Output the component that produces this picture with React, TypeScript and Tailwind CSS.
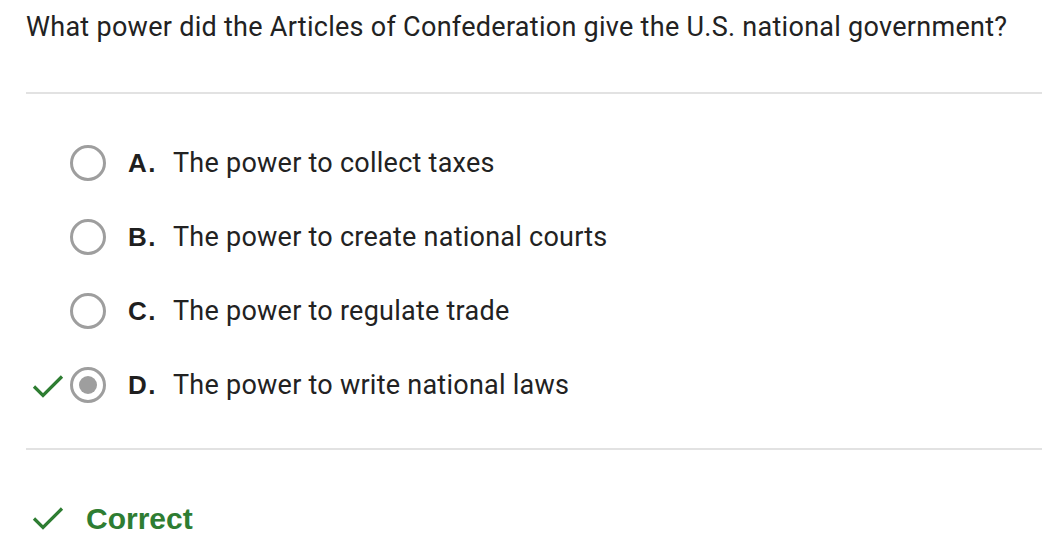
import React from "react";

const options = [
  { letter: "A.", text: "The power to collect taxes" },
  { letter: "B.", text: "The power to create national courts" },
  { letter: "C.", text: "The power to regulate trade" },
  { letter: "D.", text: "The power to write national laws", selected: true },
];

function Check({ className }: { className?: string }) {
  return (
    <svg className={className} width="32" height="24" viewBox="0 0 32 24" fill="none">
      <path d="M2 12.5 L11 21.5 L30 2.5" stroke="#2e7d32" strokeWidth="3.2" strokeLinecap="butt" strokeLinejoin="miter" />
    </svg>
  );
}

export default function App() {
  return (
    <div className="w-[1054px] h-[558px] bg-white overflow-hidden" style={{ fontFamily: "Roboto, 'Liberation Sans', sans-serif" }}>
      <div className="pl-[26px] pr-[12px]">
        <div className="h-[92px] pt-[9px]">
          <p className="text-[27px] leading-[36px] tracking-[0.28px] text-[#222222]">
            What power did the Articles of Confederation give the U.S. national government?
          </p>
        </div>
        <div className="h-[2px] bg-[#e2e2e2]" />
        <div className="pt-[32px] pb-[26px] flex flex-col">
          {options.map((o) => (
            <div key={o.letter} className="h-[74px] flex items-center">
              <div className="w-[44px] flex items-center">
                {o.selected && <Check className="ml-[6px] mt-[2px]" />}
              </div>
              <div className="w-[36px] h-[36px] rounded-full border-[3px] border-[#9e9e9e] flex items-center justify-center">
                {o.selected && <div className="w-[18px] h-[18px] rounded-full bg-[#9e9e9e]" />}
              </div>
              <span
                className="ml-[22px] w-[45px] text-[26px] tracking-[1.5px] font-bold text-[#1f1f1f]"
                style={{ fontFamily: "'Liberation Sans', Arial, sans-serif" }}
              >
                {o.letter}
              </span>
              <span className="text-[27px] tracking-[0.25px] text-[#222222]">{o.text}</span>
            </div>
          ))}
        </div>
        <div className="h-[2px] bg-[#e2e2e2]" />
        <div className="h-[108px] flex items-center pt-[28px]">
          <Check className="ml-[6px]" />
          <span
            className="ml-[22px] text-[30px] font-bold text-[#2e7d32]"
            style={{ fontFamily: "'Liberation Sans', Arial, sans-serif" }}
          >
            Correct
          </span>
        </div>
      </div>
    </div>
  );
}
